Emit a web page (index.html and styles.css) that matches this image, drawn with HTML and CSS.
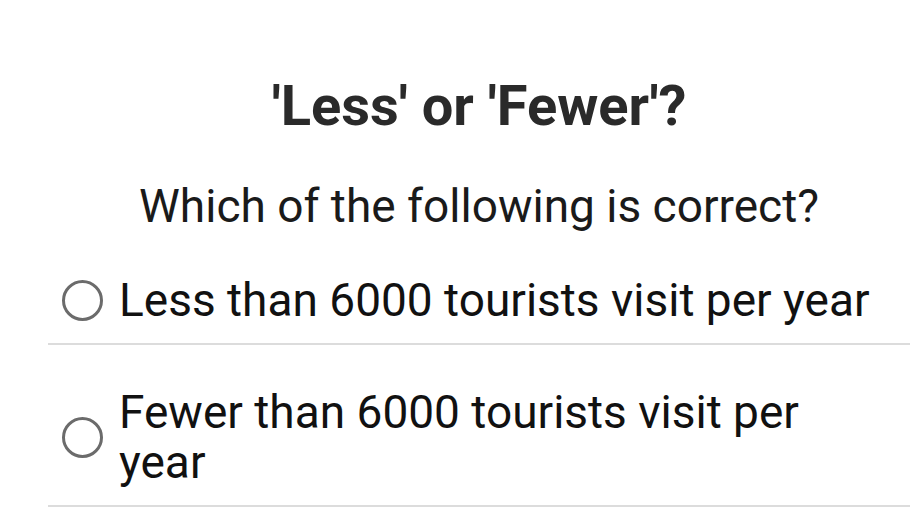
FILE: index.html
```html
<!DOCTYPE html>
<html>
<head>
<meta charset="utf-8">
<link rel="stylesheet" href="styles.css">
</head>
<body>
<div class="quiz">
  <h1 class="title">'Less' or 'Fewer'?</h1>
  <p class="question">Which of the following is correct?</p>
  <div class="options">
    <label class="option">
      <span class="radio"></span>
      <span class="opt-text">Less than 6000 tourists visit per year</span>
    </label>
    <label class="option">
      <span class="radio"></span>
      <span class="opt-text">Fewer than 6000 tourists visit per year</span>
    </label>
  </div>
</div>
</body>
</html>
```
FILE: styles.css
```css
html, body {
  margin: 0;
  padding: 0;
  background: #ffffff;
}
body {
  font-family: Roboto, "Liberation Sans", sans-serif;
}
.quiz {
  padding: 73px 9px 0 48px;
  width: 862px;
}
.title {
  margin: 0;
  text-align: center;
  font-size: 56px;
  font-weight: 700;
  color: #2a2a2a;
  line-height: 66px;
}
.question {
  margin: 40px 0 0 0;
  text-align: center;
  font-size: 46px;
  font-weight: 400;
  color: #1a1a1a;
  line-height: 54px;
}
.option {
  display: flex;
  align-items: center;
  gap: 16px;
  padding: 42px 30px 18px 14px;
  border-bottom: 2px solid #dcdcdc;
}
.radio {
  flex: none;
  width: 35px;
  height: 35px;
  border: 3px solid #6b6b6b;
  border-radius: 50%;
}
.opt-text {
  font-size: 46px;
  line-height: 50px;
  color: #111111;
}
```
